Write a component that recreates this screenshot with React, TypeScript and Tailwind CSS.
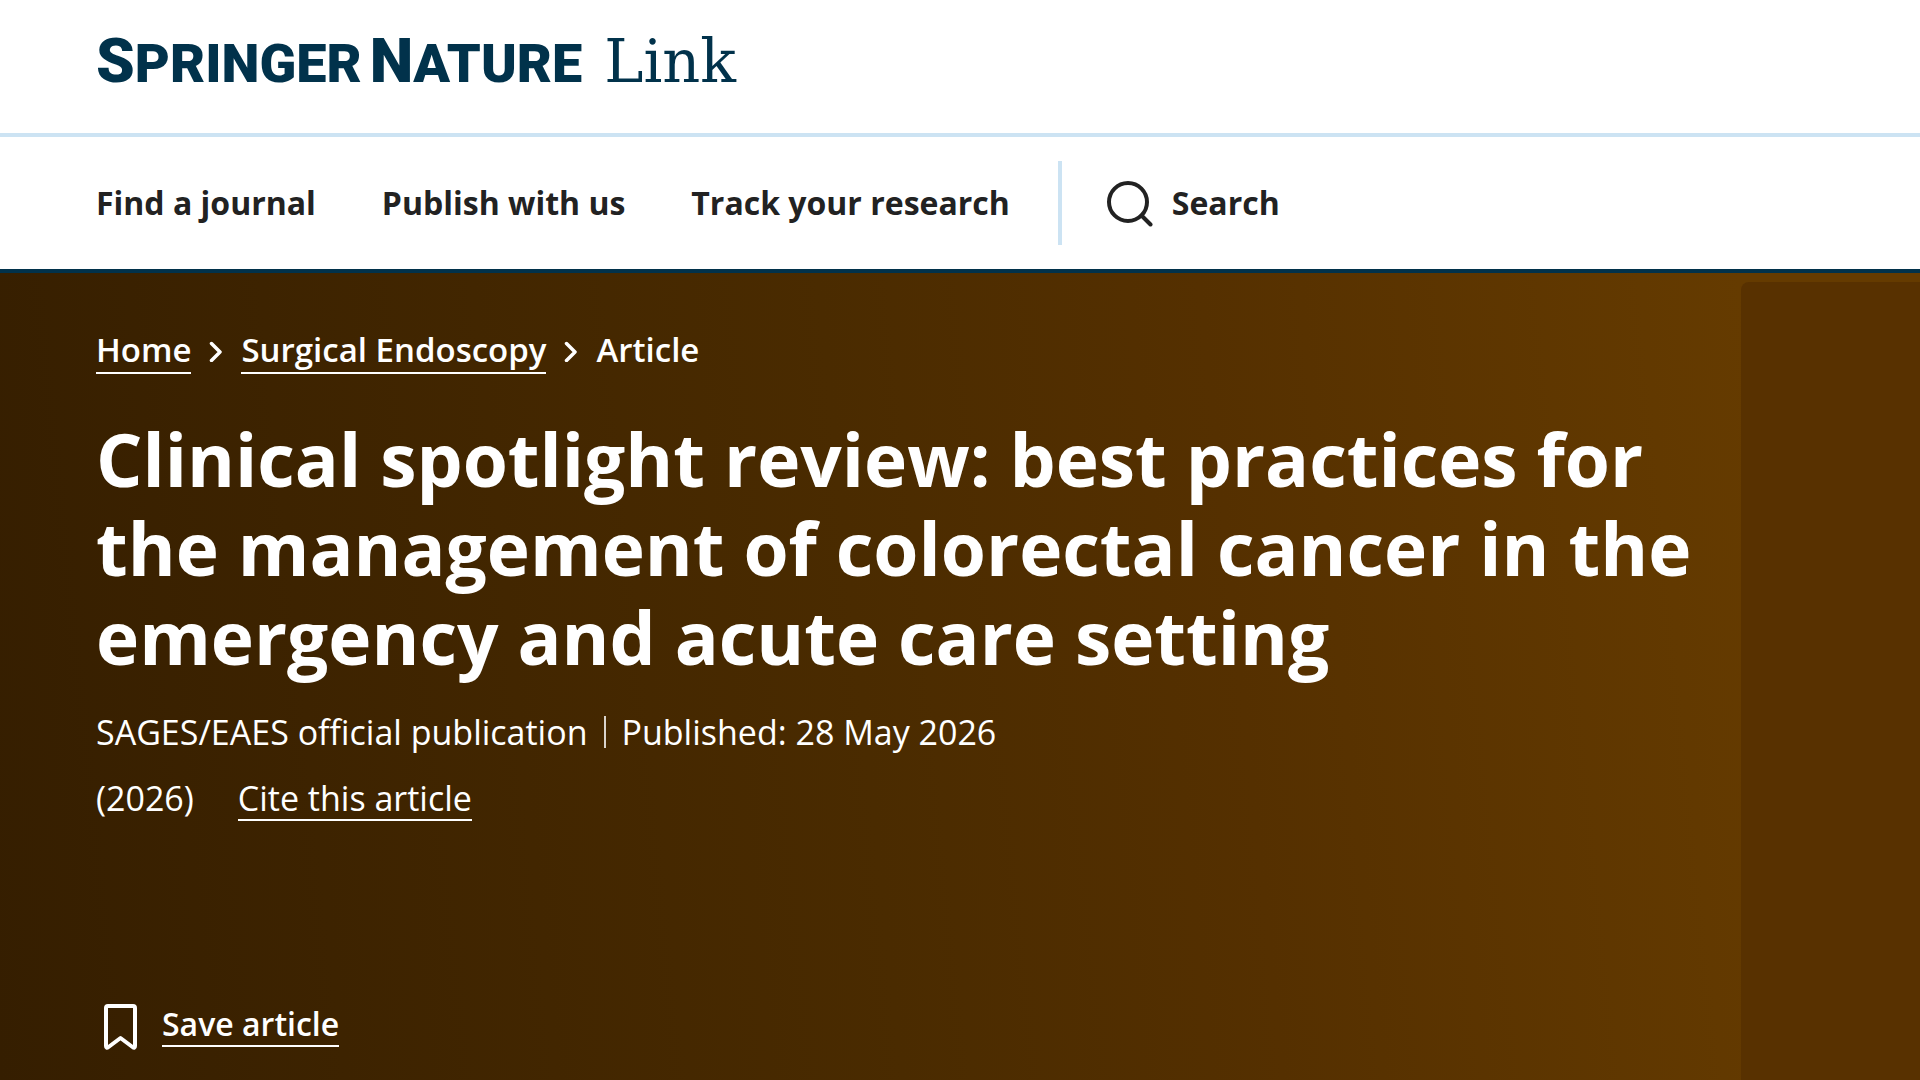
import type { ReactNode } from 'react';

type NavItem = {
    label: string;
    href: string;
};

const NAV: NavItem[] = [
    { label: 'Find a journal', href: '#journals' },
    { label: 'Publish with us', href: '#publish' },
    { label: 'Track your research', href: '#track' },
];

const Chevron = () => (
    <svg className="h-6 w-[18px] shrink-0" viewBox="0 0 18 24" fill="none" stroke="currentColor" strokeWidth="3.5" strokeLinecap="round" strokeLinejoin="round" aria-hidden="true">
        <path d="M4.500 5.500l8.500 8.500-8.500 8.500" />
    </svg>
);

const SearchIcon = () => (
    <svg className="h-12 w-12" viewBox="0 0 48 48" fill="none" stroke="currentColor" strokeWidth="4" strokeLinecap="round" aria-hidden="true">
        <circle cx="22" cy="23" r="19" />
        <path d="M35.500 36.500L44.500 45.500" />
    </svg>
);

const BookmarkIcon = () => (
    <svg className="h-14 w-9" viewBox="0 -8 36 56" fill="none" stroke="currentColor" strokeWidth="4" strokeLinecap="round" strokeLinejoin="round" aria-hidden="true">
        <path d="M6 1h25q2 0 2 2v38q0 3-2.500 1L18.500 33 6.500 42Q4 44 4 41V3q0-2 2-2z" />
    </svg>
);

const TextLink = ({ href, children }: { href: string; children: ReactNode }) => (
    <a href={href} className="border-b-2 border-white">{children}</a>
);

const App = () => {
    return (
        <div className="flex min-h-screen flex-col bg-white font-['Open_Sans',sans-serif] text-[34px] leading-[42px] text-[#222]">
            {/* Brand bar */}
            <header className="border-b-4 border-[#cce3f3] px-24 pt-6 pb-9">
                <a href="#home" className="flex h-[73px] items-baseline gap-[22px] text-[#01324b]" aria-label="Springer Nature Link">
                    <span className="flex items-baseline gap-2 font-['Roboto',sans-serif] text-[54px] leading-[73px] font-black">
                        <span><span className="text-[62px]">S</span>PRINGER</span>
                        <span><span className="text-[62px]">N</span>ATURE</span>
                    </span>
                    <span className="font-['DejaVu_Serif',serif] text-[59px] leading-[73px]">Link</span>
                </a>
            </header>

            {/* Main navigation */}
            <nav className="flex items-center border-b-4 border-[#01324b] px-24 py-6 text-[32px] font-bold">
                <ul className="flex gap-[66px]">
                    {NAV.map((item) => (
                        <li key={item.label}>
                            <a href={item.href}>{item.label}</a>
                        </li>
                    ))}
                </ul>
                <a href="#search" className="ml-12 flex h-[84px] items-center gap-[18px] border-l-4 border-[#cce3f3] pl-[44px]">
                    <SearchIcon />
                    Search
                </a>
            </nav>

            {/* Article banner */}
            <main className="flex grow bg-[linear-gradient(84deg,#351e00,#4a2b00_45%,#553000_64%,#653b00_91%)] text-white">
                <div className="grow pt-14 pb-6 pl-24">
                    <ol className="flex items-center gap-4 text-[33px] font-semibold">
                        <li><TextLink href="#home">Home</TextLink></li>
                        <li aria-hidden="true"><Chevron /></li>
                        <li><TextLink href="#journal">Surgical Endoscopy</TextLink></li>
                        <li aria-hidden="true"><Chevron /></li>
                        <li>Article</li>
                    </ol>

                    <h1 className="mt-[43px] max-w-[1600px] text-[73px] leading-[89px] font-bold">
                        Clinical spotlight review: best practices for the management of colorectal cancer in the emergency and acute care setting
                    </h1>

                    <ul className="mt-[30px] flex items-center">
                        <li>SAGES/EAES official publication</li>
                        <li className="ml-4 flex items-center gap-4">
                            <span className="h-8 w-0.5 bg-white/80" />
                            <span>Published: <time dateTime="2026-05-28">28 May 2026</time></span>
                        </li>
                    </ul>
                    <p className="mt-6 flex gap-11">
                        <span>(2026)</span>
                        <TextLink href="#citeas">Cite this article</TextLink>
                    </p>

                    <button type="button" className="mt-44 flex items-center gap-6 pl-1.5 text-[32px] font-semibold">
                        <BookmarkIcon />
                        <span className="border-b-2 border-white">Save article</span>
                    </button>
                </div>
                <aside className="mt-[9px] w-[179px] shrink-0 rounded-tl-lg bg-[#583100]" />
            </main>
        </div>
    );
};

export default App;
